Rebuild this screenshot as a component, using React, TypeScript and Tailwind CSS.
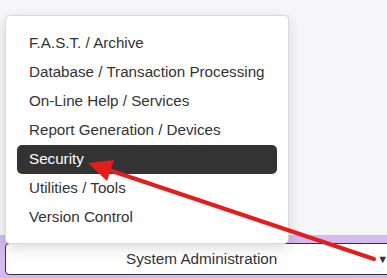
const menuItems = [
  'F.A.S.T. / Archive',
  'Database / Transaction Processing',
  'On-Line Help / Services',
  'Report Generation / Devices',
  'Security',
  'Utilities / Tools',
  'Version Control',
];

export default function App() {
  const active = 'Security';

  return (
    <div
      className="relative h-[278px] w-[387px] overflow-hidden bg-[#f7f6f9] flex flex-col"
      style={{ fontFamily: '"Liberation Sans", Arial, sans-serif' }}
    >
      {/* Page area above the select */}
      <div className="h-[235px] shrink-0" />

      {/* Purple toolbar with the select */}
      <div className="flex-1 bg-[#d5b9f1] pt-[8px]">
        <div className="ml-[5px] w-[420px] h-[32px] flex items-center bg-white border border-[#333] rounded-l-[4px] text-[15.3px] text-[#333]">
          <span className="pl-[120px]">System Administration</span>
          <span className="ml-[100px] text-[11px] leading-none text-[#333]">▼</span>
        </div>
      </div>

      {/* Dropdown menu */}
      <div className="absolute left-[5px] top-[15px] w-[284px] h-[229px] bg-white border border-[#d9d9d9] rounded-[5px] shadow-[0_4px_14px_rgba(0,0,0,0.15)] px-[11px] py-[13px]">
        <ul className="flex flex-col">
          {menuItems.map((item) => (
            <li
              key={item}
              className={`h-[29px] flex items-center px-[12px] rounded-[5px] text-[15.2px] ${
                item === active ? 'bg-[#333] text-white' : 'text-[#333]'
              }`}
            >
              {item}
            </li>
          ))}
        </ul>
      </div>

      {/* Annotation arrow */}
      <svg className="absolute inset-0 pointer-events-none" width="387" height="278" viewBox="0 0 387 278">
        <line x1="374" y1="259" x2="106" y2="169" stroke="#e21d1d" strokeWidth="4" strokeLinecap="round" />
        <polygon points="88,163 114,160 107,181" fill="#e21d1d" />
      </svg>
    </div>
  );
}
